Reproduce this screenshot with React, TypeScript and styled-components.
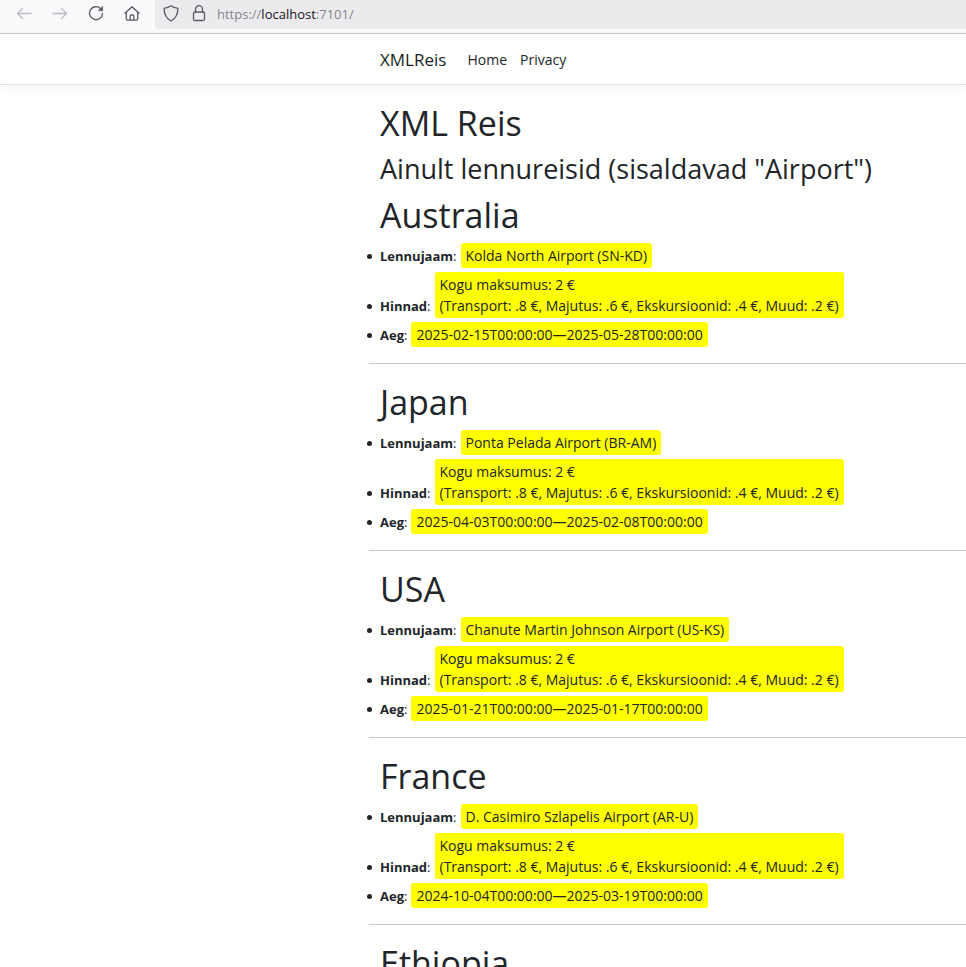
import React from "react";
import styled, { createGlobalStyle } from "styled-components";

const GlobalStyle = createGlobalStyle`
  *, *::before, *::after { box-sizing: border-box; }
  body {
    margin: 0;
    background: #fff;
    color: #212529;
    font: 14px/21px "Open Sans", "Noto Sans", sans-serif;
  }
  html { scrollbar-width: none; }
`;

const Toolbar = styled.header`
  display: flex;
  align-items: flex-start;
  height: 34px;
  background: #f9f9fb;
  border-bottom: 1px solid #ccccd0;
`;

const ToolButtons = styled.div`
  display: flex;
  gap: 16px;
  padding: 3px 13px 0 14px;
`;

const ToolButton = styled.button`
  display: flex;
  width: 20px;
  height: 20px;
  padding: 0;
  border: 0;
  background: none;
  color: #5b5b66;
  &:disabled { color: #bcbcc1; }
`;

const AddressBar = styled.div`
  flex: 1;
  display: flex;
  align-items: center;
  gap: 8px;
  height: 29px;
  padding: 0 6px 2px;
  border-radius: 0 0 0 4px;
  background: #ebebed;
  color: #5b5b66;
`;

const Url = styled.a`
  padding-top: 1px;
  font-size: 13px;
  color: #85858c;
  text-decoration: none;
  span { color: #15141a; }
`;

const Columns = styled.div`
  display: grid;
  grid-template-columns: minmax(0, 369px) minmax(0, 1fr);
  > * { grid-column: 2; }
`;

const NavBar = styled.div`
  border-bottom: 1px solid #dee2e6;
  box-shadow: 0 4px 11px rgba(0, 0, 0, 0.05);
`;

const Nav = styled.nav`
  display: flex;
  align-items: center;
  gap: 13px;
  height: 50px;
  padding: 0 11px;
`;

const Brand = styled.a`
  margin-right: 8px;
  font-size: 17px;
  color: #1b1e21;
  text-decoration: none;
`;

const NavLink = styled.a`
  font-size: 14px;
  color: #212529;
  text-decoration: none;
`;

const Content = styled.main`
  padding-top: 17px;
`;

const Title = styled.h1`
  margin: 0 11px 6px;
  font-size: 34px;
  font-weight: 400;
  line-height: 43px;
`;

const Subtitle = styled.h2`
  margin: 0 11px 8px;
  font-size: 27px;
  font-weight: 400;
  line-height: 35px;
`;

const Trip = styled.section`
  & + & {
    margin-top: 16px;
    padding-top: 17px;
    border-top: 1px solid #c8c9ca;
  }
`;

const Facts = styled.ul`
  display: flex;
  flex-direction: column;
  gap: 4px;
  margin: 0;
  padding: 0 11px;
  list-style: none;
`;

const Fact = styled.li`
  display: flex;
  align-items: last baseline;
  gap: 4px;
  &::before {
    content: "";
    flex: none;
    align-self: flex-end;
    width: 5px;
    height: 5px;
    margin: 0 4px 9px -13px;
    border-radius: 50%;
    background: #212529;
  }
`;

const Label = styled.span`
  font-size: 13px;
  white-space: nowrap;
`;

const Highlight = styled.span`
  padding: 2px 5px;
  border-radius: 3px;
  background: #ff0;
  font-size: 14px;
`;

const Icon = ({ children }: { children: React.ReactNode }) => (
  <svg width="20" height="20" viewBox="0 0 20 20" fill="none" stroke="currentColor" strokeWidth="1.3" strokeLinecap="round" strokeLinejoin="round" aria-hidden="true">
    {children}
  </svg>
);

const trips = [
  { country: "Australia", airport: "Kolda North Airport (SN-KD)", time: "2025-02-15T00:00:00—2025-05-28T00:00:00" },
  { country: "Japan", airport: "Ponta Pelada Airport (BR-AM)", time: "2025-04-03T00:00:00—2025-02-08T00:00:00" },
  { country: "USA", airport: "Chanute Martin Johnson Airport (US-KS)", time: "2025-01-21T00:00:00—2025-01-17T00:00:00" },
  { country: "France", airport: "D. Casimiro Szlapelis Airport (AR-U)", time: "2024-10-04T00:00:00—2025-03-19T00:00:00" },
];

export default function App() {
  return (
    <>
      <GlobalStyle />
      <Toolbar>
        <ToolButtons>
          <ToolButton aria-label="Back" disabled>
            <Icon><path d="M17 10.5H3.5M8.5 5.5l-5 5 5 5" /></Icon>
          </ToolButton>
          <ToolButton aria-label="Forward" disabled>
            <Icon><path d="M3 10.5h13.5M11.500 5.500l5 5-5 5" /></Icon>
          </ToolButton>
          <ToolButton aria-label="Reload">
            <Icon>
              <path d="M14.500 5.500A6.500 6.500 0 1 0 16.500 10.500" />
              <path d="M16.700 3.500v4.200h-4.200z" fill="currentColor" strokeWidth="0.600" />
            </Icon>
          </ToolButton>
          <ToolButton aria-label="Home">
            <Icon>
              <path d="M3 10.300 10 3.700l7 6.600M4.300 9.500v6.200c0 .9.500 1.400 1.400 1.400h8.600c.9 0 1.400-.5 1.400-1.400V9.500M8.200 17v-4c0-.7.400-1 1-1h1.600c.6 0 1 .3 1 1v4" />
            </Icon>
          </ToolButton>
        </ToolButtons>
        <AddressBar>
          <Icon><path d="M10 1.800c2 1.500 4.200 2.200 6.900 2.500 0 5.700-1.900 10.200-6.900 12.700-5-2.500-6.900-7-6.900-12.700C5.800 4 8 3.300 10 1.800z" /></Icon>
          <Icon>
            <rect x="4.500" y="8" width="11" height="8.500" rx="1.500" />
            <path d="M6.500 8V5.200a3.500 3.500 0 0 1 7 0V8" />
          </Icon>
          <Url href="#">https://<span>localhost</span>:7101/</Url>
        </AddressBar>
      </Toolbar>
      <NavBar>
        <Columns>
          <Nav>
            <Brand href="#">XMLReis</Brand>
            <NavLink href="#">Home</NavLink>
            <NavLink href="#">Privacy</NavLink>
          </Nav>
        </Columns>
      </NavBar>
      <Columns>
        <Content>
          <Title>XML Reis</Title>
          <Subtitle>Ainult lennureisid (sisaldavad "Airport")</Subtitle>
          {trips.map((trip) => (
            <Trip key={trip.country}>
              <Title>{trip.country}</Title>
              <Facts>
                <Fact>
                  <Label><b>Lennujaam</b>:</Label>
                  <Highlight>{trip.airport}</Highlight>
                </Fact>
                <Fact>
                  <Label><b>Hinnad</b>:</Label>
                  <Highlight>
                    Kogu maksumus: 2 €<br />
                    (Transport: .8 €, Majutus: .6 €, Ekskursioonid: .4 €, Muud: .2 €)
                  </Highlight>
                </Fact>
                <Fact>
                  <Label><b>Aeg</b>:</Label>
                  <Highlight>{trip.time}</Highlight>
                </Fact>
              </Facts>
            </Trip>
          ))}
          <Trip>
            <Title>Ethiopia</Title>
          </Trip>
        </Content>
      </Columns>
    </>
  );
}
